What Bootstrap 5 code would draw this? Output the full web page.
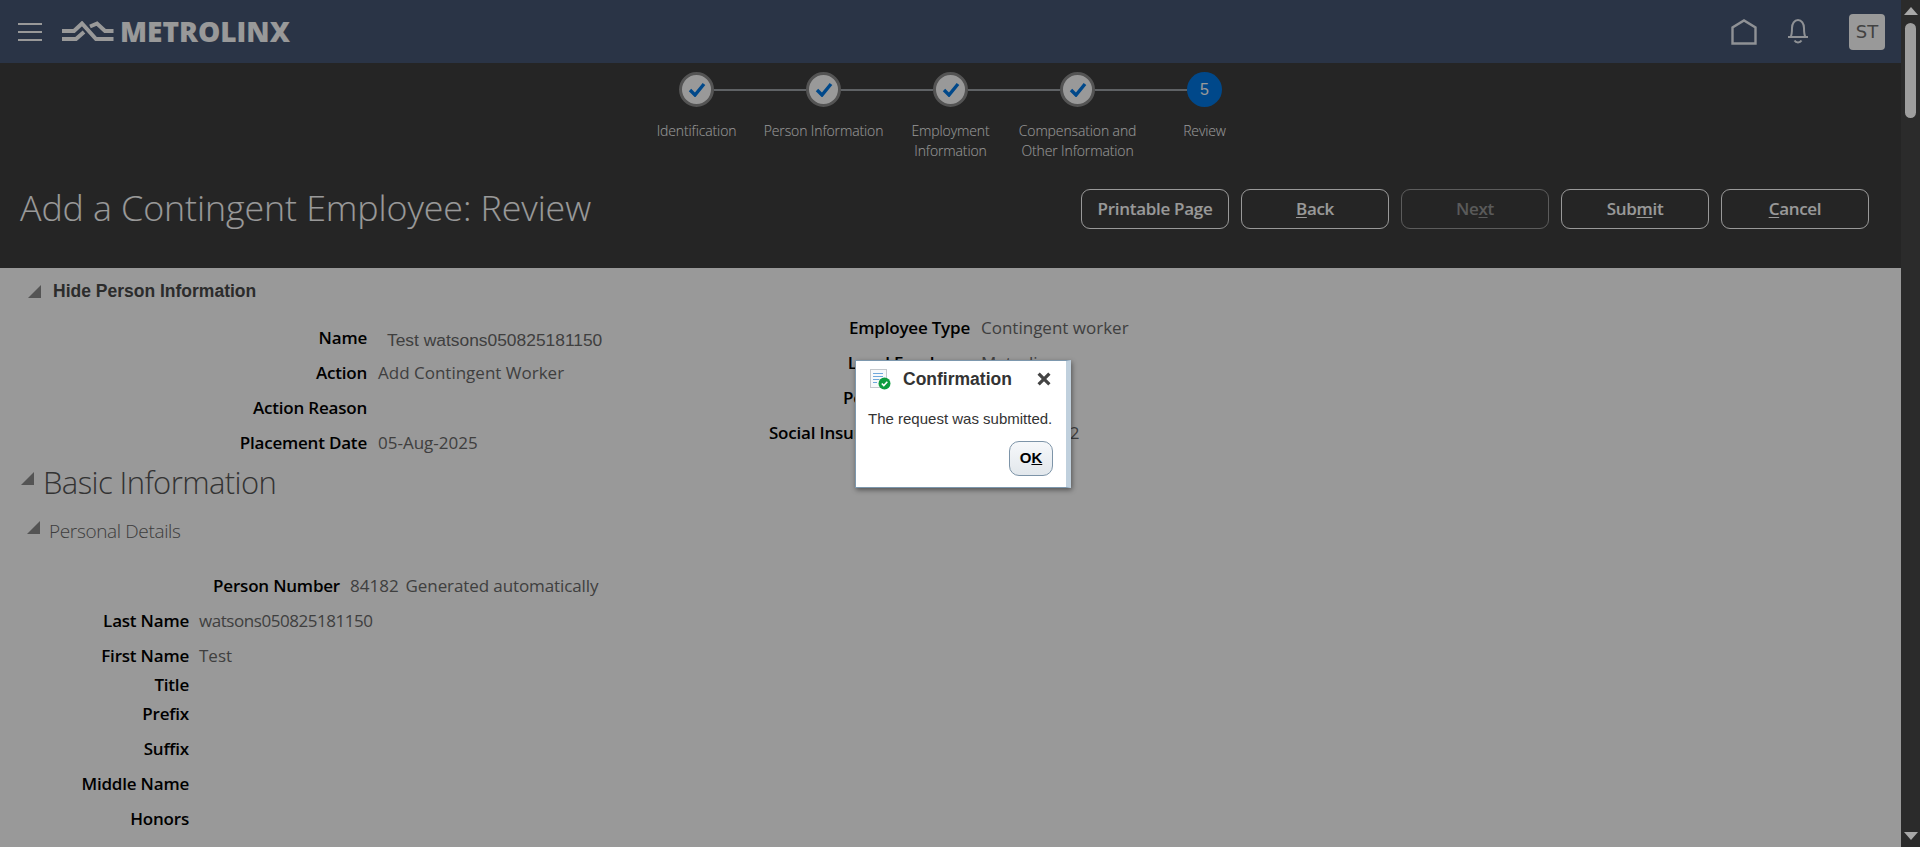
<!DOCTYPE html>
<html lang="en">
<head>
    <meta charset="UTF-8">
    <meta name="viewport" content="width=device-width, initial-scale=1.0">
    <title>Add a Contingent Employee: Review</title>
    <link href="https://cdn.jsdelivr.net/npm/bootstrap@5.3.0/dist/css/bootstrap.min.css" rel="stylesheet">
    <style>
        html, body { height: 847px; overflow: hidden; }
        body { background: #fff; color: #000; font-family: "Open Sans", "Liberation Sans", sans-serif; }

        .page-area { width: 1901px; height: 847px; overflow: hidden; }
        .fake-scroll { width: 19px; height: 847px; background: #2b2b2b; }
        .fake-scroll .thumb { width: 11px; height: 95px; border-radius: 6px; background: #9e9e9e; margin-top: 8px; }
        .fake-scroll .arrow-up, .fake-scroll .arrow-down { width: 0; height: 0; border-left: 7px solid transparent; border-right: 7px solid transparent; }
        .fake-scroll .arrow-up { border-bottom: 8px solid #a8a8a8; margin-top: 7px; }
        .fake-scroll .arrow-down { border-top: 8px solid #a8a8a8; margin-top: auto; margin-bottom: 7px; }

        .dim-layer { position: absolute; inset: 0; background: rgba(0,0,0,.4); z-index: 10; }

        .top-bar { height: 63px; background: #465876; padding-left: 18px; }
        .burger { width: 24px; }
        .burger span { display: block; height: 2px; background: #fff; margin-bottom: 6px; }
        .burger span:last-child { margin-bottom: 0; }
        .brand-logo { margin-left: 20px; }
        .brand-name { color: #fff; font-weight: 800; font-size: 28px; line-height: 30px; margin-left: 6px; margin-top: -2px; letter-spacing: 0; }
        .top-icons { margin-left: auto; padding-right: 16px; }
        .user-tile { width: 36px; height: 36px; background: #fff; color: #6e6e6e; border-radius: 4px; font-family: "DejaVu Sans", sans-serif; font-size: 18px; margin-left: 40px; }
        .bell-icon { margin-left: 30px; }

        .train-band { height: 205px; background: #3f3f3f; color: #fff; }
        .train-step { width: 127px; }
        .train-line { flex: 1 1 0; height: 2px; background: #9ea4a9; }
        .train-line.off { visibility: hidden; }
        .train-dot { width: 35px; height: 35px; border-radius: 50%; background: #fff; border: 3px solid #8c8c8c; flex: none; }
        .train-dot.now { background: #0079e6; border: 0; font-size: 16px; color: #fff; font-family: "Liberation Sans", sans-serif; }
        .train-label { font-size: 14px; line-height: 20px; font-weight: 300; text-align: center; margin-top: 14px; letter-spacing: -.12px; }
        .train-row { padding-top: 9px; height: 96px; }

        .title-row { padding: 0 32px 0 20px; margin-top: 26px; }
        .page-title { font-size: 35.8px; font-weight: 300; line-height: 44px; margin: 0 0 4px; letter-spacing: -.1px; }
        .action-set { gap: 12px; }
        .act-btn { width: 148px; height: 40px; padding: 0; background: transparent; border: 1.5px solid #fff; border-radius: 9px; color: #fff; font-size: 17px; font-weight: 600; letter-spacing: -.3px; }
        .act-btn.off { border-color: #9a9a9a; color: #969696; }
        .act-btn u { text-underline-offset: 2px; }

        .disclose { display: flex; align-items: center; }
        .hide-person { height: 30px; margin-top: 8px; padding-left: 28px; font-family: "Liberation Sans", sans-serif; font-weight: 700; font-size: 17.5px; color: #4a4a4a; }
        .hide-person svg { margin-right: 12px; }
        .person-cols { height: 154px; }
        .col-left { width: 620px; padding-top: 14px; }
        .col-right { padding-top: 4px; }
        .info-row { display: flex; align-items: center; height: 35px; font-size: 17px; }
        .info-label { text-align: right; font-weight: 600; letter-spacing: -.2px; white-space: nowrap; }
        .info-value { color: #6a6a6a; white-space: nowrap; }
        .w-left .info-label { width: 367px; margin-right: 11px; }
        .w-right .info-label { width: 350px; margin-right: 11px; }
        .w-name .info-label { width: 189px; margin-right: 10px; }
        .w-num .info-label { width: 340px; margin-right: 10px; }
        .arial-val { font-family: "Liberation Sans", sans-serif; font-size: 17.4px; margin-left: 9px; margin-top: 6px; }
        .digits-val { letter-spacing: -.45px; }
        .hint-val { margin-left: 7px; letter-spacing: -.1px; }
        .row-short { height: 23px; }

        .section-head { height: 44px; padding-left: 21px; font-weight: 300; font-size: 31px; color: #555; letter-spacing: -.6px; }
        .section-head svg { margin-right: 9px; margin-top: -7px; }
        .sub-head { height: 30px; margin-top: 12px; margin-bottom: 22px; padding-left: 27px; font-weight: 300; font-size: 19px; color: #666; letter-spacing: -.35px; }
        .sub-head svg { margin-right: 9px; margin-top: -7px; }

        .confirm-box { position: absolute; left: 855px; top: 360px; width: 216px; height: 128px; background: #fff; border: 1px solid #7d98ae; border-right: 5px solid #c0d0dd; box-shadow: 1px 2px 5px rgba(0,0,0,.45); z-index: 20; font-family: "Liberation Sans", sans-serif; }
        .confirm-head { height: 36px; padding: 8px 0 0 14px; }
        .confirm-title { font-size: 17.5px; font-weight: 700; color: #333; margin-left: 12px; line-height: 20px; }
        .confirm-x { margin-left: auto; margin-right: 15px; margin-top: 3px; }
        .confirm-text { margin: 12px 0 0 12px; font-size: 15px; line-height: 20px; color: #333; white-space: nowrap; }
        .ok-btn { width: 44px; height: 35px; margin: 12px 0 0 153px; padding: 0; background: linear-gradient(#f6f8fa, #e2e7ec); border: 1px solid #7d94a8; border-radius: 10px; color: #000; font-size: 15px; font-weight: 700; display: block; }
    </style>
</head>
<body class="d-flex">
    <div class="page-area position-relative">
        <header class="top-bar d-flex align-items-center">
            <div class="burger"><span></span><span></span><span></span></div>
            <svg class="brand-logo" width="52" height="22" viewBox="62 20 52 22" fill="none" stroke="#fff" stroke-width="4">
                <path d="M62 30H74L82 22.5L96 38H113.5"/>
                <path d="M62 38H76L84 31M90 25.5L97 22.5L105 30H113.5"/>
            </svg>
            <span class="brand-name">METROLINX</span>
            <div class="top-icons d-flex align-items-center">
                <svg width="26" height="26" viewBox="0 0 26 26" fill="none" stroke="#eef2f8" stroke-width="2.4"><path d="M1.5 24.5V8.5L13 1.5L24.5 8.5V24.5Z"/></svg>
                <svg class="bell-icon" width="22" height="25" viewBox="0 0 22 25" fill="none" stroke="#eef2f8" stroke-width="2"><path d="M1 18H21M3.5 18C5 16 5 13 5 9C5 4.5 7.500 1 11 1C14.500 1 17 4.500 17 9C17 13 17 16 18.500 18"/><path d="M7.500 21.500C9 24 13 24 14.500 21.500"/></svg>
                <div class="user-tile d-flex align-items-center justify-content-center">ST</div>
            </div>
        </header>

        <section class="train-band">
            <div class="train-row d-flex justify-content-center">
                <div class="train-step">
                    <div class="d-flex align-items-center">
                        <span class="train-line off"></span>
                        <span class="train-dot d-flex align-items-center justify-content-center"><svg width="18" height="15" viewBox="0 0 18 15" fill="none" stroke="#0079e6" stroke-width="3.400"><path d="M2 8L7 13L16 2"/></svg></span>
                        <span class="train-line"></span>
                    </div>
                    <div class="train-label">Identification</div>
                </div>
                <div class="train-step">
                    <div class="d-flex align-items-center">
                        <span class="train-line"></span>
                        <span class="train-dot d-flex align-items-center justify-content-center"><svg width="18" height="15" viewBox="0 0 18 15" fill="none" stroke="#0079e6" stroke-width="3.400"><path d="M2 8L7 13L16 2"/></svg></span>
                        <span class="train-line"></span>
                    </div>
                    <div class="train-label">Person Information</div>
                </div>
                <div class="train-step">
                    <div class="d-flex align-items-center">
                        <span class="train-line"></span>
                        <span class="train-dot d-flex align-items-center justify-content-center"><svg width="18" height="15" viewBox="0 0 18 15" fill="none" stroke="#0079e6" stroke-width="3.400"><path d="M2 8L7 13L16 2"/></svg></span>
                        <span class="train-line"></span>
                    </div>
                    <div class="train-label">Employment<br>Information</div>
                </div>
                <div class="train-step">
                    <div class="d-flex align-items-center">
                        <span class="train-line"></span>
                        <span class="train-dot d-flex align-items-center justify-content-center"><svg width="18" height="15" viewBox="0 0 18 15" fill="none" stroke="#0079e6" stroke-width="3.400"><path d="M2 8L7 13L16 2"/></svg></span>
                        <span class="train-line"></span>
                    </div>
                    <div class="train-label">Compensation and<br>Other Information</div>
                </div>
                <div class="train-step">
                    <div class="d-flex align-items-center">
                        <span class="train-line"></span>
                        <span class="train-dot now d-flex align-items-center justify-content-center">5</span>
                        <span class="train-line off"></span>
                    </div>
                    <div class="train-label">Review</div>
                </div>
            </div>
            <div class="title-row d-flex align-items-center justify-content-between">
                <h1 class="page-title">Add a Contingent Employee: Review</h1>
                <div class="d-flex action-set">
                    <button type="button" class="act-btn">Printable Page</button>
                    <button type="button" class="act-btn"><u>B</u>ack</button>
                    <button type="button" class="act-btn off">Ne<u>x</u>t</button>
                    <button type="button" class="act-btn">Sub<u>m</u>it</button>
                    <button type="button" class="act-btn"><u>C</u>ancel</button>
                </div>
            </div>
        </section>

        <div class="disclose hide-person">
            <svg width="13" height="13" viewBox="0 0 13 13"><polygon points="13,0 13,13 0,13" fill="#8c8c8c"/></svg>
            Hide Person Information
        </div>

        <div class="person-cols d-flex">
            <div class="col-left w-left">
                <div class="info-row"><div class="info-label">Name</div><div class="info-value arial-val">Test watsons050825181150</div></div>
                <div class="info-row"><div class="info-label">Action</div><div class="info-value">Add Contingent Worker</div></div>
                <div class="info-row"><div class="info-label">Action Reason</div></div>
                <div class="info-row"><div class="info-label">Placement Date</div><div class="info-value">05-Aug-2025</div></div>
            </div>
            <div class="col-right w-right">
                <div class="info-row"><div class="info-label">Employee Type</div><div class="info-value">Contingent worker</div></div>
                <div class="info-row"><div class="info-label">Legal Employer</div><div class="info-value">Metrolinx</div></div>
                <div class="info-row"><div class="info-label">Person Number</div><div class="info-value">84182</div></div>
                <div class="info-row"><div class="info-label">Social Insurance Number</div><div class="info-value">123-456-782</div></div>
            </div>
        </div>

        <div class="disclose section-head">
            <svg width="13" height="13" viewBox="0 0 13 13"><polygon points="13,0 13,13 0,13" fill="#8c8c8c"/></svg>
            Basic Information
        </div>
        <div class="disclose sub-head">
            <svg width="13" height="13" viewBox="0 0 13 13"><polygon points="13,0 13,13 0,13" fill="#8c8c8c"/></svg>
            Personal Details
        </div>

        <div class="w-num">
            <div class="info-row"><div class="info-label">Person Number</div><div class="info-value">84182</div><div class="info-value hint-val">Generated automatically</div></div>
        </div>
        <div class="w-name">
            <div class="info-row"><div class="info-label">Last Name</div><div class="info-value digits-val">watsons050825181150</div></div>
            <div class="info-row"><div class="info-label">First Name</div><div class="info-value">Test</div></div>
            <div class="info-row row-short"><div class="info-label">Title</div></div>
            <div class="info-row"><div class="info-label">Prefix</div></div>
            <div class="info-row"><div class="info-label">Suffix</div></div>
            <div class="info-row"><div class="info-label">Middle Name</div></div>
            <div class="info-row"><div class="info-label">Honors</div></div>
            <div class="info-row"><div class="info-label">Also Known As</div></div>
        </div>

        <div class="dim-layer"></div>

        <div class="confirm-box" role="dialog">
            <div class="confirm-head d-flex align-items-start">
                <svg width="21" height="21" viewBox="0 0 21 21">
                    <rect x=".5" y=".5" width="16" height="18" fill="#f7f9fb" stroke="#c5c9cd"/>
                    <path d="M3 4.500H13M3 7.500H13M3 10.500H9M3 13.500H7" stroke="#6fa8dc" stroke-width="1.200"/>
                    <circle cx="14.500" cy="14.500" r="6" fill="#0f9d3f"/>
                    <path d="M11.800 14.500L13.800 16.500L17.300 12.800" fill="none" stroke="#fff" stroke-width="1.600"/>
                </svg>
                <span class="confirm-title">Confirmation</span>
                <svg class="confirm-x" width="14" height="14" viewBox="0 0 13 13" fill="none" stroke="#444" stroke-width="3"><path d="M1.500 1.500L11.500 11.500M11.500 1.500L1.500 11.500"/></svg>
            </div>
            <div class="confirm-text">The request was submitted.</div>
            <button type="button" class="ok-btn">O<u>K</u></button>
        </div>
    </div>

    <aside class="fake-scroll d-flex flex-column align-items-center">
        <div class="arrow-up"></div>
        <div class="thumb"></div>
        <div class="arrow-down"></div>
    </aside>

    <script src="https://cdn.jsdelivr.net/npm/bootstrap@5.3.0/dist/js/bootstrap.bundle.min.js"></script>
</body>
</html>
